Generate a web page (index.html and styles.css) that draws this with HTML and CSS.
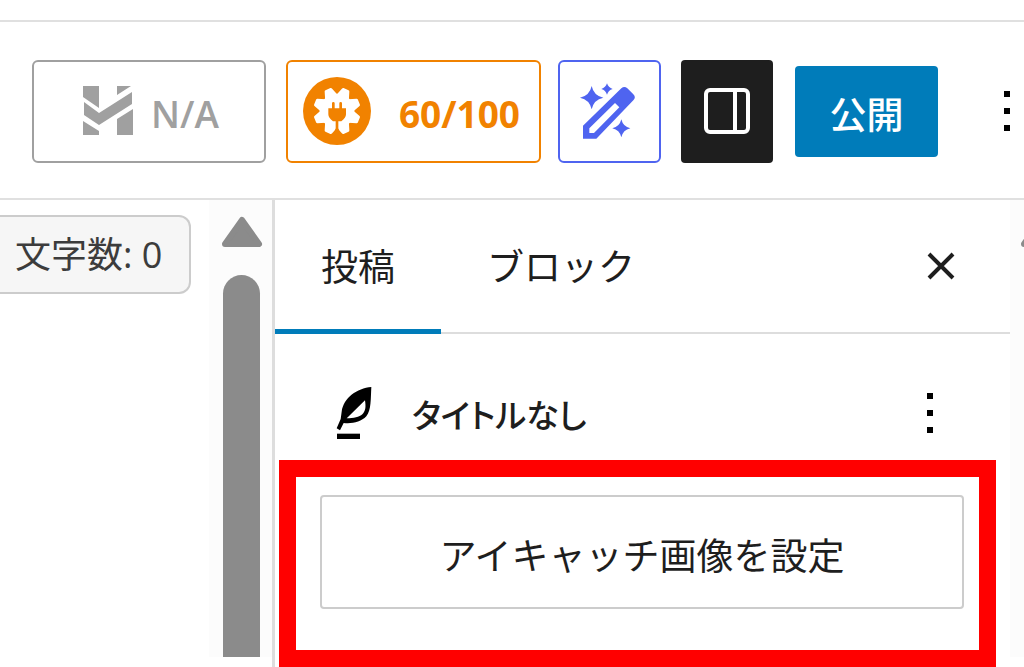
FILE: index.html
```html
<!DOCTYPE html>
<html lang="ja">
<head>
    <meta charset="UTF-8">
    <meta name="viewport" content="width=device-width, initial-scale=1.0">
    <title>投稿を編集</title>
    <link rel="stylesheet" href="styles.css">
</head>
<body>
    <header class="toolbar">
        <button class="button score">
            <svg width="50" height="50" viewBox="0 0 50 50" fill="currentColor">
                <path d="M0 0H16V22L0 11Z M34 0H48L34 9Z M1 16L16 27L49 6V18L16 39L1 29Z M0 35L16 45V49H0Z M34 33L50 23V49H34Z"/>
            </svg>
            <span>N/A</span>
        </button>
        <button class="button score seo">
            <svg width="68" height="68" viewBox="-102 -102 204 204">
                <circle r="102" fill="#f18200"/>
                <circle r="52" fill="#fff"/>
                <g fill="#fff" stroke="#fff" stroke-width="8" stroke-linejoin="round">
                    <path transform="rotate(22.5)" d="M-16 -44L-8 -67H8L16 -44V44L8 67H-8L-16 44Z"/>
                    <path transform="rotate(67.5)" d="M-16 -44L-8 -67H8L16 -44V44L8 67H-8L-16 44Z"/>
                    <path transform="rotate(112.5)" d="M-16 -44L-8 -67H8L16 -44V44L8 67H-8L-16 44Z"/>
                    <path transform="rotate(157.5)" d="M-16 -44L-8 -67H8L16 -44V44L8 67H-8L-16 44Z"/>
                </g>
                <path d="M-26 -8H27V10Q27 20 13 31H4V52L10 68H-10L-4 52V31H-12Q-26 20 -26 10Z" fill="#f18200"/>
                <path d="M-11 -23V-6M11 -23V-6" stroke="#f18200" stroke-width="8" stroke-linecap="round"/>
            </svg>
            <span>60/100</span>
        </button>
        <button class="button assistant" aria-label="AI">
            <svg width="54" height="55" viewBox="0 0 162 165" fill="currentColor">
                <path fill-rule="evenodd" d="M6 125L121 13Q130 5 139 13L157 31Q166 40 157 49L46 164H6Z M25 133V147H39L115 70L102 57Z"/>
                <path d="M32 6Q38 35 67 41Q38 47 32 76Q26 47 -3 41Q26 35 32 6Z M78 -2Q82 11 95 15Q82 19 78 32Q74 19 61 15Q74 11 78 -2Z M121 106Q126 128 148 133Q126 138 121 160Q116 138 94 133Q116 128 121 106Z"/>
            </svg>
        </button>
        <button class="button settings" aria-label="設定">
            <svg width="46" height="46" viewBox="0 0 46 46" fill="none" stroke="currentColor" stroke-width="4">
                <rect x="2" y="2" width="42" height="42" rx="4"/>
                <path d="M31 2V44"/>
            </svg>
        </button>
        <button class="button publish">公開</button>
        <button class="icon-button more" aria-label="オプション">
            <svg width="6" height="40" viewBox="0 0 6 40">
                <path d="M0 0H6V6H0Z M0 17H6V23H0Z M0 34H6V40H0Z"/>
            </svg>
        </button>
    </header>

    <div class="workspace">
        <main class="editor">
            <div class="count">文字数: 0</div>
        </main>
        <div class="scrollbar">
            <svg width="42" height="32" viewBox="0 0 42 32">
                <path d="M21 4L38 28H4Z" fill="#8b8b8b" stroke="#8b8b8b" stroke-width="6" stroke-linejoin="round"/>
            </svg>
            <div class="thumb"></div>
        </div>
        <aside class="sidebar">
            <nav class="tabs">
                <button class="tab active">投稿</button>
                <button class="tab">ブロック</button>
                <button class="icon-button close" aria-label="閉じる">
                    <svg width="26" height="26" viewBox="0 0 26 26" stroke="currentColor" stroke-width="4">
                        <path d="M1 1L25 25M25 1L1 25"/>
                    </svg>
                </button>
            </nav>
            <div class="post">
                <svg width="35" height="52" viewBox="0 0 105 156">
                    <path fill-rule="evenodd" d="M103 0C60 4 20 32 14 74L11 96L-1 124L9 130L20 108C45 111 72 105 88 88C103 70 101 34 103 0Z M33 90L84 40C87 60 86 72 76 82C67 90 50 94 29 94Z"/>
                    <path d="M0 140H69V156H0Z"/>
                </svg>
                <h2 class="post-title">タイトルなし</h2>
                <button class="icon-button" aria-label="操作">
                    <svg width="6" height="40" viewBox="0 0 6 40">
                        <path d="M0 0H6V6H0Z M0 17H6V23H0Z M0 34H6V40H0Z"/>
                    </svg>
                </button>
            </div>
            <div class="highlight">
                <button class="featured">アイキャッチ画像を設定</button>
            </div>
        </aside>
        <div class="page-scroll">
            <svg width="42" height="32" viewBox="0 0 42 32">
                <path d="M21 4L38 28H4Z" fill="#8b8b8b" stroke="#8b8b8b" stroke-width="6" stroke-linejoin="round"/>
            </svg>
        </div>
    </div>
</body>
</html>
```
FILE: styles.css
```css
* {
    box-sizing: border-box;
}
body {
    margin: 0;
    padding-top: 20px;
    min-height: 100vh;
    display: flex;
    flex-direction: column;
    overflow: hidden;
    background-color: #fff;
    color: #1e1e1e;
    font-family: "Open Sans", "Noto Sans CJK JP", sans-serif;
    font-size: 37px;
    line-height: 48px;
}
button {
    padding: 0;
    border: none;
    background: none;
    color: inherit;
    font: inherit;
    cursor: pointer;
}
svg {
    display: block;
    flex-shrink: 0;
    overflow: visible;
}
.toolbar {
    display: flex;
    align-items: center;
    height: 180px;
    padding: 2px 14px 0 32px;
    border-top: 2px solid #e0e0e0;
    border-bottom: 2px solid #e0e0e0;
}
.button {
    display: flex;
    align-items: center;
    justify-content: center;
    flex-shrink: 0;
    height: 103px;
    border-radius: 6px;
}
.score {
    gap: 18px;
    width: 234px;
    margin-right: 20px;
    padding-left: 4px;
    border: 2px solid #a0a0a0;
    color: #a0a0a0;
    font-weight: 600;
}
.score span {
    padding-top: 6px;
}
.seo {
    gap: 28px;
    width: 255px;
    margin-right: 17px;
    padding: 0 4px 0 0;
    border-color: #f18200;
    color: #f18200;
    font-weight: 700;
}
.assistant {
    width: 103px;
    margin-right: 20px;
    padding-right: 4px;
    border: 2px solid #4f64f0;
    color: #4f64f0;
}
.settings {
    width: 92px;
    margin-right: 22px;
    border-radius: 4px;
    background-color: #1e1e1e;
    color: #fff;
}
.publish {
    width: 143px;
    height: 91px;
    padding-top: 8px;
    border-radius: 4px;
    background-color: #007cba;
    color: #fff;
    font-weight: 500;
}
.icon-button {
    margin-left: auto;
}
.workspace {
    flex: 1;
    display: grid;
    grid-template-columns: 209px 63px 1fr 14px;
}
.editor {
    padding-top: 15px;
}
.count {
    width: 191px;
    height: 79px;
    padding: 14px 0 0 15px;
    border: 2px solid #ccc;
    border-left: none;
    border-radius: 0 12px 12px 0;
    background-color: #f6f6f6;
    color: #3c3c3c;
    font-size: 36px;
    white-space: nowrap;
}
.scrollbar {
    display: flex;
    flex-direction: column;
    align-items: center;
    gap: 27px;
    margin-bottom: 10px;
    padding: 16px 0 0 2px;
    background-color: #fcfcfc;
}
.thumb {
    flex: 1;
    width: 37px;
    border-radius: 19px 19px 0 0;
    background-color: #8b8b8b;
}
.sidebar {
    display: flex;
    flex-direction: column;
    border-left: 3px solid #ddd;
}
.tabs {
    display: flex;
    height: 134px;
    border-bottom: 2px solid #ddd;
}
.tab {
    height: 134px;
    padding: 4px 46px 0;
    border-bottom: 5px solid transparent;
}
.tab.active {
    border-color: #007cba;
}
.close {
    margin-right: 56px;
}
.post {
    display: flex;
    align-items: center;
    padding: 52px 77px 20px 62px;
}
.post-title {
    margin: 0 0 0 40px;
    padding-top: 6px;
    font-size: 33px;
    font-weight: 500;
    font-feature-settings: "palt";
}
.highlight {
    flex: 1;
    margin: 0 14px 0 4px;
    padding: 18px 15px 40px 24px;
    border: 17px solid #f00;
}
.featured {
    width: 100%;
    height: 114px;
    padding-top: 8px;
    border: 2px solid #ccc;
    border-radius: 4px;
}
.page-scroll {
    overflow: hidden;
    margin-bottom: 10px;
    padding: 16px 0 0 10px;
    background-color: #fcfcfc;
}
```
